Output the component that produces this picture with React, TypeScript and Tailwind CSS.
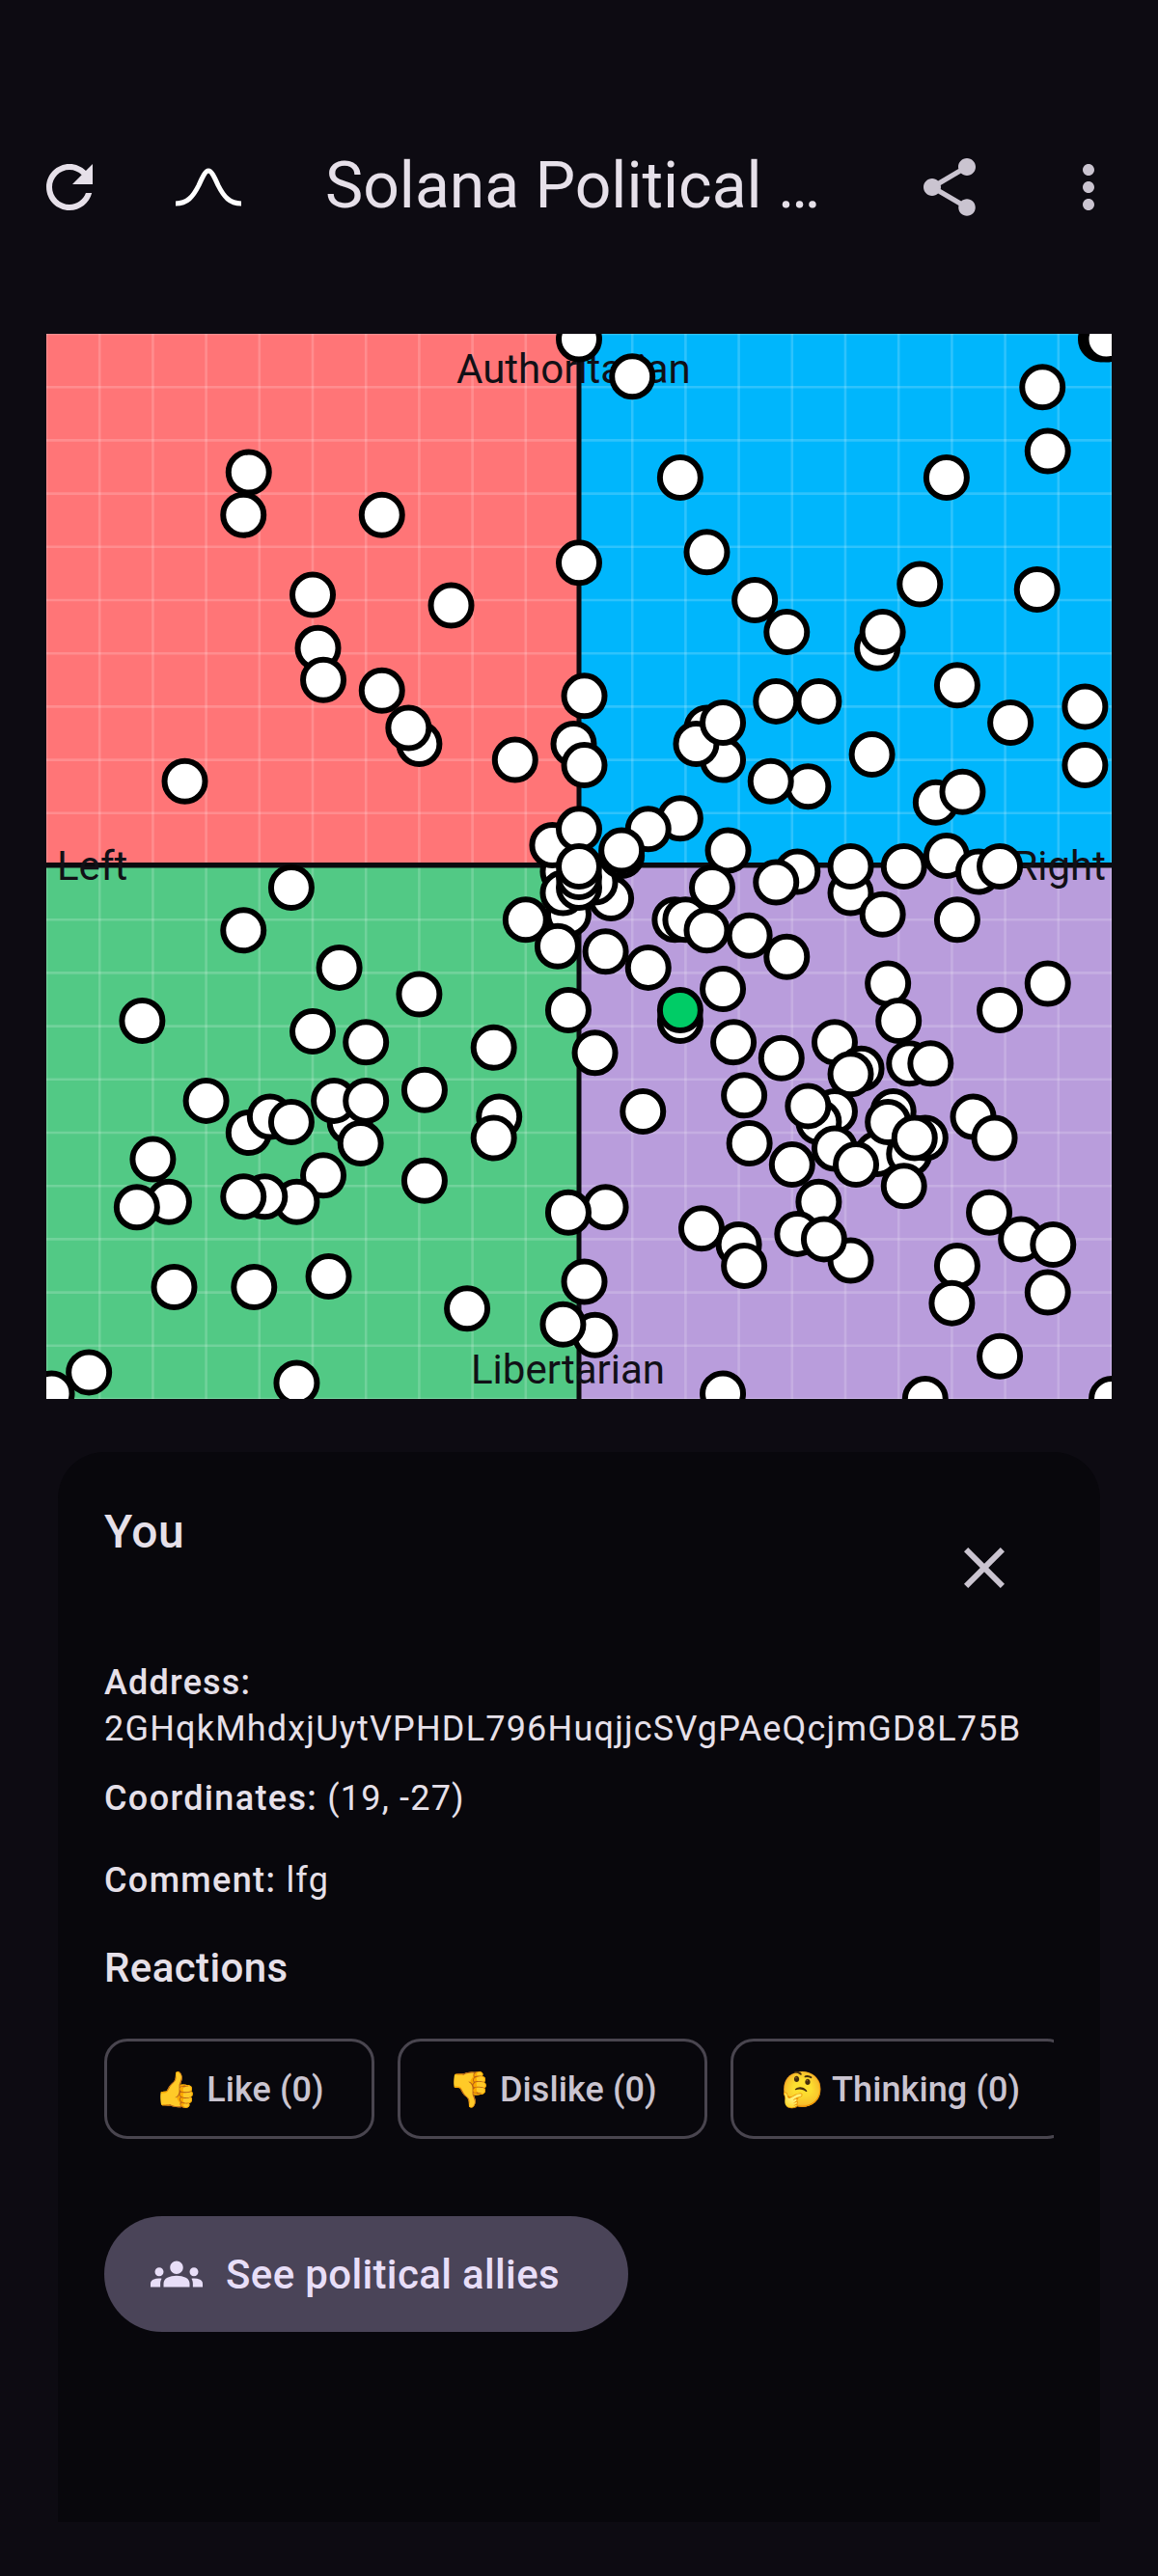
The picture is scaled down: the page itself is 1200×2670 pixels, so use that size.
const QUADRANT_SIZE = 552
const UNIT = 5.52
const CENTER = 552

// voter positions in chart units (-100..100), in paint order
const voters: [number, number][] = [
  [-62, 74], [-63, 66], [-37, 66], [-50, 51], [-24, 49], [-49, 41], [-48, 35], [-37, 33], [-30, 23], [-32, 26],
  [-12, 20], [-74, 16], [0, 99], [10, 92], [98, 99], [99, 99], [87, 90], [88, 78], [19, 73], [69, 73],
  [24, 59], [0, 57], [64, 53], [86, 52], [33, 50], [39, 44], [56, 41], [57, 44], [71, 34], [1, 32],
  [37, 31], [45, 31], [81, 27], [95, 30], [95, 19], [24, 26], [27, 20], [22, 23], [27, 27], [-1, 23],
  [1, 19], [43, 15], [36, 16], [55, 21], [67, 12], [72, 14], [28, 3],
  [-54, -4], [-63, -12], [-45, -19], [-30, -24], [-82, -29], [-50, -31], [-40, -33], [-16, -34], [-29, -42],
  [-70, -44], [-62, -50], [-58, -47], [-54, -48], [-43, -48], [-46, -44], [-40, -44], [-41, -52], [-15, -47], [-16, -51],
  [-29, -59], [-80, -55], [-77, -63], [-83, -64], [-48, -58], [-53, -63], [-59, -62], [-63, -62], [-76, -79], [-61, -79],
  [-47, -77], [-21, -83], [-99, -99], [-92, -95], [-53, -97],
  [-2, -9], [-3, -1], [-5, 4], [6, -6], [-3, -5], [3, -3], [0, -4], [0, -2], [19, 9], [13, 7], [0, 7],
  [-10, -10], [-4, -15], [-2, -27], [3, -35], [5, -16], [13, -19],
  [41, -1], [37, -3], [51, -5], [51, 0], [61, 0], [69, 2], [75, -1], [79, 0], [25, -4], [57, -9], [71, -10],
  [18, -10], [20, -10], [24, -12], [32, -13], [39, -17], [27, -23], [19, -29],
  [29, -33], [38, -36], [48, -33], [53, -38], [51, -39], [58, -22], [60, -29], [62, -37], [66, -37], [88, -22], [79, -27],
  [31, -43], [12, -46], [48, -46], [45, -48], [43, -45], [48, -53], [56, -54], [59, -46], [58, -48], [62, -54], [65, -51], [63, -51],
  [52, -56], [61, -60], [40, -56], [32, -52], [74, -47], [78, -51], [45, -63], [41, -69], [51, -74], [46, -70],
  [23, -68], [30, -71], [31, -75], [5, -64], [-2, -65], [77, -65], [83, -70], [89, -71], [71, -75], [70, -82],
  [88, -80], [79, -92], [1, -78], [3, -88], [-3, -86], [27, -99], [65, -100], [100, -100],
  [8, 2], [8, 3], [0, 0],
]

const gridSteps = Array.from({ length: 21 }, (_, i) => i * 55.2)

function PoliticalCompass() {
  return (
    <svg width="1104" height="1104" viewBox="0 0 1104 1104" className="block">
      <rect x="0" y="0" width={QUADRANT_SIZE} height={QUADRANT_SIZE} fill="#ff7577" />
      <rect x={QUADRANT_SIZE} y="0" width={QUADRANT_SIZE} height={QUADRANT_SIZE} fill="#00b6fc" />
      <rect x="0" y={QUADRANT_SIZE} width={QUADRANT_SIZE} height={QUADRANT_SIZE} fill="#52c985" />
      <rect x={QUADRANT_SIZE} y={QUADRANT_SIZE} width={QUADRANT_SIZE} height={QUADRANT_SIZE} fill="#b99ddc" />
      {gridSteps.map((p) => (
        <g key={p} stroke="#ffffff" strokeOpacity="0.18" strokeWidth="2.6">
          <line x1={p} y1="0" x2={p} y2="1104" />
          <line x1="0" y1={p} x2="1104" y2={p} />
        </g>
      ))}
      <rect x="549.5" y="0" width="5" height="1104" fill="#0a0a0e" />
      <rect x="0" y="548" width="1104" height="5.5" fill="#0a0a0e" />
      <g fontFamily="Roboto, sans-serif" fontSize="42" fill="#111016">
        <text x="425" y="51">Authoritarian</text>
        <text x="11" y="566">Left</text>
        <text x="1098" y="566" textAnchor="end">Right</text>
        <text x="440" y="1088">Libertarian</text>
      </g>
      {voters.map(([x, y], i) => (
        <circle key={i} cx={CENTER + x * UNIT} cy={CENTER - y * UNIT} r="21" fill="#ffffff" stroke="#000000" strokeWidth="6" />
      ))}
      <circle cx={CENTER + 19 * UNIT} cy={CENTER + 27 * UNIT} r="21" fill="#00cc66" stroke="#000000" strokeWidth="6" />
    </svg>
  )
}

function MaterialIcon({ d, size = 72, color }: { d: string; size?: number; color: string }) {
  return (
    <svg width={size} height={size} viewBox="0 0 24 24" fill={color} className="block shrink-0">
      <path d={d} />
    </svg>
  )
}

function ReactionChip({ label }: { label: string }) {
  return (
    <div className="flex h-[104px] shrink-0 items-center whitespace-nowrap rounded-[24px] border-[3px] border-[#49454f] px-[49px] pt-[2px] text-[36px] font-medium tracking-[0.1px] text-[#cac4d0]">
      {label}
    </div>
  )
}

export default function App() {
  return (
    <div className="flex h-[2670px] w-[1200px] flex-col overflow-hidden bg-[#0d0b12] pt-[158px] font-['Roboto',sans-serif] text-[#e6e0e9]">
      <header className="flex h-[72px] items-center">
        <button className="flex w-[144px] justify-center">
          <MaterialIcon color="#e6e0e9" d="M17.65 6.35C16.2 4.9 14.21 4 12 4c-4.42 0-7.99 3.58-7.99 8s3.57 8 7.99 8c3.73 0 6.84-2.55 7.73-6h-2.08c-.82 2.33-3.04 4-5.65 4-3.31 0-6-2.69-6-6s2.69-6 6-6c1.66 0 3.14.69 4.22 1.78L13 11h7V4l-2.35 2.35z" />
        </button>
        <button className="flex w-[144px] justify-center">
          <svg width="72" height="72" viewBox="0 0 72 72" fill="none" stroke="#ffffff" strokeWidth="5" className="block">
            <path d="M2 53C14 53 20 46 26 34C30 25 33 19 36 19C39 19 42 25 46 34C52 46 58 53 70 53" />
          </svg>
        </button>
        <h1 className="ml-[49px] min-w-0 flex-1 self-start whitespace-nowrap text-[66px] leading-[70px]">Solana Political …</h1>
        <button className="flex w-[144px] justify-center">
          <MaterialIcon color="#cac4d0" d="M18 16.08c-.76 0-1.44.3-1.96.77L8.91 12.7c.05-.23.09-.46.09-.7s-.04-.47-.09-.7l7.05-4.11c.54.5 1.25.81 2.04.81 1.66 0 3-1.34 3-3s-1.34-3-3-3-3 1.34-3 3c0 .24.04.47.09.7L8.04 9.81C7.5 9.31 6.79 9 6 9c-1.66 0-3 1.34-3 3s1.34 3 3 3c.79 0 1.5-.31 2.04-.81l7.12 4.16c-.05.21-.08.43-.08.65 0 1.61 1.31 2.92 2.92 2.92 1.61 0 2.92-1.31 2.92-2.92s-1.31-2.92-2.92-2.92z" />
        </button>
        <button className="flex w-[144px] justify-center">
          <MaterialIcon color="#cac4d0" d="M12 8c1.1 0 2-.9 2-2s-.9-2-2-2-2 .9-2 2 .9 2 2 2zm0 2c-1.1 0-2 .9-2 2s.9 2 2 2 2-.9 2-2-.9-2-2-2zm0 6c-1.1 0-2 .9-2 2s.9 2 2 2 2-.9 2-2-.9-2-2-2z" />
        </button>
      </header>

      <div className="ml-[48px] mt-[116px]">
        <PoliticalCompass />
      </div>

      <section className="mx-[60px] mt-[55px] h-[1109px] rounded-t-[48px] bg-[#08070c] px-[48px] pt-[47px]">
        <div className="flex items-start justify-between">
          <h2 className="text-[48px] font-medium leading-[72px] tracking-[0.45px]">You</h2>
          <button className="mr-[36px] mt-[37px]">
            <MaterialIcon color="#cac4d0" d="M19 6.41 17.59 5 12 10.59 6.41 5 5 6.41 10.59 12 5 17.59 6.41 19 12 13.41 17.59 19 19 17.59 13.41 12z" />
          </button>
        </div>

        <div className="mt-[59px] text-[36px] leading-[48px] tracking-[1.2px]">
          <p className="font-medium">Address:</p>
          <p>2GHqkMhdxjUytVPHDL796HuqjjcSVgPAeQcjmGD8L75B</p>
          <p className="mt-[24px]">
            <span className="font-medium tracking-[1.35px]">Coordinates:</span> (19, -27)
          </p>
          <p className="mt-[37px]">
            <span className="font-medium tracking-[1.35px]">Comment:</span> lfg
          </p>
        </div>

        <h3 className="mt-[37px] text-[42px] font-medium leading-[60px] tracking-[0.4px]">Reactions</h3>

        <div className="mt-[43px] flex gap-[24px] overflow-hidden">
          <ReactionChip label="👍 Like (0)" />
          <ReactionChip label="👎 Dislike (0)" />
          <ReactionChip label="🤔 Thinking (0)" />
        </div>

        <button className="mt-[80px] flex h-[120px] items-center gap-[24px] rounded-full bg-[#4a4458] pl-[48px] pr-[71px] text-[42px] font-medium tracking-[0.35px] text-[#e8def8]">
          <svg width="54" height="54" viewBox="0 0 24 24" fill="#e8def8" className="block shrink-0">
            <path d="M12 12.75c1.63 0 3.07.39 4.24.9 1.08.48 1.76 1.56 1.76 2.73V18H6v-1.61c0-1.18.68-2.26 1.76-2.73 1.17-.52 2.61-.91 4.24-.91zM4 13c1.1 0 2-.9 2-2s-.9-2-2-2-2 .9-2 2 .9 2 2 2zm1.13 1.1c-.37-.06-.74-.1-1.13-.1-.99 0-1.93.21-2.78.58C.48 14.9 0 15.62 0 16.43V18h4.5v-1.61c0-.83.23-1.61.63-2.29zM20 13c1.1 0 2-.9 2-2s-.9-2-2-2-2 .9-2 2 .9 2 2 2zm4 3.43c0-.81-.48-1.53-1.22-1.85-.85-.37-1.79-.58-2.78-.58-.39 0-.76.04-1.13.1.4.68.63 1.46.63 2.29V18H24v-1.57zM12 6c1.66 0 3 1.34 3 3s-1.34 3-3 3-3-1.34-3-3 1.34-3 3-3z" />
          </svg>
          See political allies
        </button>
      </section>
    </div>
  )
}
